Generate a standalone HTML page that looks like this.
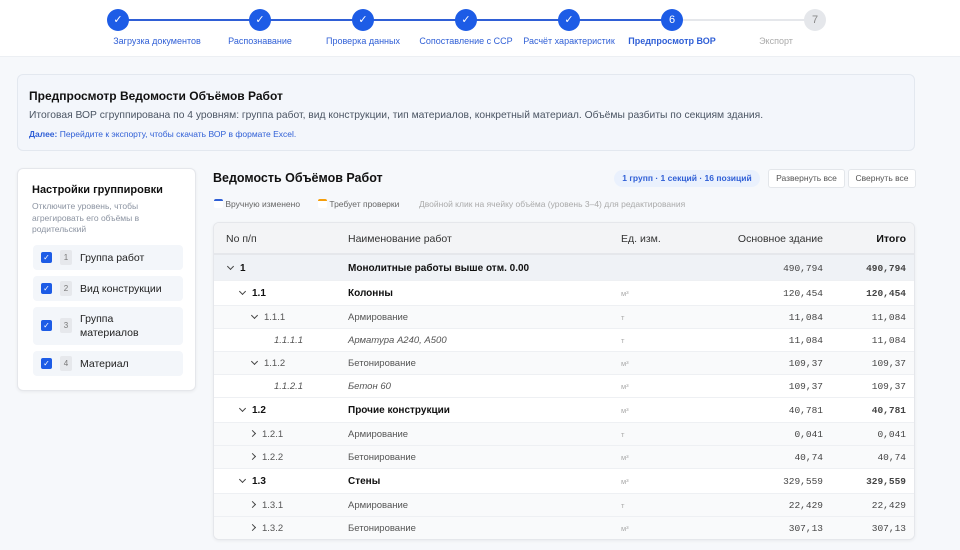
<!DOCTYPE html>
<html><head><meta charset="utf-8"><style>
*{box-sizing:border-box;margin:0;padding:0}
body{width:960px;height:550px;overflow:hidden;background:#f6f8fb;font-family:"Liberation Sans",sans-serif;color:#1f2937;position:relative}
.hdr{position:absolute;left:0;top:0;width:960px;height:57px;background:#fff;border-bottom:1px solid #eceff3}
.ln{position:absolute;top:19px;height:2px;background:#2f5fd6}
.ln.g{background:#e5e7eb}
.c{position:absolute;top:9px;width:22px;height:22px;border-radius:50%;background:#1d5ce6;color:#fff;font-size:11px;text-align:center;line-height:22px}
.c.g{background:#e5e7eb;color:#888}
.lb{position:absolute;top:36px;font-size:9px;color:#2f5fd6;transform:translateX(-50%);white-space:nowrap}
.info{position:absolute;left:17px;top:74px;width:898px;height:77px;background:#f3f6fb;border:1px solid #e3e8ef;border-radius:6px;padding:14px 11px}
.info h1{font-size:12px;font-weight:bold;color:#111}
.info p{font-size:10.3px;color:#4b5563;margin-top:7px}
.info .n{font-size:8.5px;color:#2f5fd6;margin-top:8px}
.lc{position:absolute;left:17px;top:168px;width:179px;height:223px;background:#fff;border:1px solid #e5e7eb;border-radius:6px;box-shadow:0 1px 3px rgba(0,0,0,.06)}
.lc h3{position:absolute;left:14px;top:15px;font-size:11px;font-weight:bold;color:#111}
.lc .d{position:absolute;left:14px;top:32px;width:140px;font-size:8.5px;color:#8b93a1;line-height:11.5px}
.it{position:absolute;left:15px;width:150px;background:#f3f6fa;border-radius:4px;font-size:10.5px;color:#222}
.cb{position:absolute;left:8px;width:11px;height:11px;background:#1d5ce6;border-radius:2px;color:#fff;font-size:8px;line-height:11px;text-align:center}
.nm{position:absolute;left:27px;width:12px;height:15px;background:#e6e8ec;border-radius:2px;font-size:8px;color:#777;text-align:center;line-height:15px}
.tt{position:absolute;left:47px}
.title{position:absolute;left:213px;top:171px;font-size:12.5px;font-weight:bold;color:#111}
.badge{position:absolute;left:614px;top:170px;width:146px;height:17px;background:#eaf1fd;border-radius:9px;font-size:8.5px;color:#2f5fd6;font-weight:bold;text-align:center;line-height:17px}
.btn{position:absolute;top:169px;height:19px;background:#fff;border:1px solid #e3e6ea;border-radius:3px;font-size:8.5px;color:#555;text-align:center;line-height:17px}
.leg{position:absolute;top:199px;font-size:8.5px;color:#666}
.tbl{position:absolute;left:213px;top:222px;width:702px;height:318px;background:#fff;border:1px solid #e5e7eb;border-radius:6px;overflow:hidden;box-shadow:0 1px 3px rgba(0,0,0,.06)}
.r{position:absolute;left:0;width:702px;border-bottom:1px solid #eef0f3;font-size:9.5px;color:#555}
.r span{position:absolute}
.r .m{font-family:"Liberation Mono",monospace;color:#444;font-size:9.5px}
.r .u{left:407px;color:#aaa;font-size:7.5px}
.b{font-weight:bold;color:#111;font-size:10px}
i.d,i.rt{display:inline-block;width:5px;height:5px;border-right:1.3px solid #444;border-bottom:1.3px solid #444;margin-right:7px}
i.d{transform:rotate(45deg);vertical-align:2px}
i.rt{transform:rotate(-45deg);vertical-align:1px}
</style></head><body>
<div class="hdr">
<div class="ln" style="left:118px;width:554px"></div>
<div class="ln g" style="left:672px;width:143px"></div>
<div class="c" style="left:107px">✓</div>
<div class="c" style="left:249px">✓</div>
<div class="c" style="left:352px">✓</div>
<div class="c" style="left:455px">✓</div>
<div class="c" style="left:558px">✓</div>
<div class="c" style="left:661px">6</div>
<div class="c g" style="left:804px">7</div>
<div class="lb" style="left:157px">Загрузка документов</div>
<div class="lb" style="left:260px">Распознавание</div>
<div class="lb" style="left:363px">Проверка данных</div>
<div class="lb" style="left:466px">Сопоставление с ССР</div>
<div class="lb" style="left:569px">Расчёт характеристик</div>
<div class="lb" style="left:672px;font-weight:bold">Предпросмотр ВОР</div>
<div class="lb" style="left:776px;color:#aaa">Экспорт</div>
</div>
<div class="info"><h1>Предпросмотр Ведомости Объёмов Работ</h1>
<p>Итоговая ВОР сгруппирована по 4 уровням: группа работ, вид конструкции, тип материалов, конкретный материал. Объёмы разбиты по секциям здания.</p>
<div class="n"><b>Далее:</b> Перейдите к экспорту, чтобы скачать ВОР в формате Excel.</div></div>
<div class="lc"><h3>Настройки группировки</h3>
<div class="d">Отключите уровень, чтобы агрегировать его объёмы в родительский</div>
<div class="it" style="top:76px;height:25px"><div class="cb" style="top:7px">✓</div><div class="nm" style="top:5px">1</div><div class="tt" style="top:7px">Группа работ</div></div>
<div class="it" style="top:107px;height:25px"><div class="cb" style="top:7px">✓</div><div class="nm" style="top:5px">2</div><div class="tt" style="top:7px">Вид конструкции</div></div>
<div class="it" style="top:138px;height:38px"><div class="cb" style="top:13px">✓</div><div class="nm" style="top:11px">3</div><div class="tt" style="top:5px;line-height:14px">Группа<br>материалов</div></div>
<div class="it" style="top:182px;height:25px"><div class="cb" style="top:7px">✓</div><div class="nm" style="top:5px">4</div><div class="tt" style="top:7px">Материал</div></div>
</div>
<div class="title">Ведомость Объёмов Работ</div>
<div class="badge">1 групп · 1 секций · 16 позиций</div>
<div class="btn" style="left:768px;width:77px">Развернуть все</div>
<div class="btn" style="left:848px;width:68px">Свернуть все</div>
<div class="leg" style="left:214px"><span style="display:inline-block;width:9px;height:9px;border-top:2px solid #2f5fd6;border-radius:2px;background:#fff;vertical-align:-1px"></span> Вручную изменено</div>
<div class="leg" style="left:318px"><span style="display:inline-block;width:9px;height:9px;border-top:2px solid #f59e0b;border-radius:2px;background:#fff;vertical-align:-1px"></span> Требует проверки</div>
<div class="leg" style="left:419px;color:#aaa">Двойной клик на ячейку объёма (уровень 3–4) для редактирования</div>
<div class="tbl">
<div class="r" style="top:0;height:32px;background:#f3f4f6;border-bottom:2px solid #e5e7eb;font-size:10.5px;color:#333"><span style="left:12px;top:10px">No п/п</span><span style="left:134px;top:10px">Наименование работ</span><span style="left:407px;top:10px">Ед. изм.</span><span style="right:93px;top:10px">Основное здание</span><span style="right:10px;top:10px;font-weight:bold;color:#111">Итого</span></div>
<div class="r" style="top:32px;height:26px;background:#eff2f6"><span class="b" style="left:14px;top:8px"><i class="d"></i>1</span><span class="b" style="left:134px;top:8px">Монолитные работы выше отм. 0.00</span><span class="m" style="right:93px;top:8px">490,794</span><span class="m b" style="right:10px;top:8px">490,794</span></div>
<div class="r" style="top:58px;height:25px"><span class="b" style="left:26px;top:7px"><i class="d"></i>1.1</span><span class="b" style="left:134px;top:7px">Колонны</span><span class="u" style="top:8px">м³</span><span class="m" style="right:93px;top:7px">120,454</span><span class="m b" style="right:10px;top:7px">120,454</span></div>
<div class="r" style="top:83px;height:23px;background:#f9fafb"><span style="left:38px;top:6px"><i class="d"></i>1.1.1</span><span style="left:134px;top:6px">Армирование</span><span class="u" style="top:7px">т</span><span class="m" style="right:93px;top:6px">11,084</span><span class="m" style="right:10px;top:6px">11,084</span></div>
<div class="r" style="top:106px;height:23px"><span style="left:60px;top:6px;font-style:italic">1.1.1.1</span><span style="left:134px;top:6px;font-style:italic">Арматура А240, А500</span><span class="u" style="top:7px">т</span><span class="m" style="right:93px;top:6px">11,084</span><span class="m" style="right:10px;top:6px">11,084</span></div>
<div class="r" style="top:129px;height:23px;background:#f9fafb"><span style="left:38px;top:6px"><i class="d"></i>1.1.2</span><span style="left:134px;top:6px">Бетонирование</span><span class="u" style="top:7px">м³</span><span class="m" style="right:93px;top:6px">109,37</span><span class="m" style="right:10px;top:6px">109,37</span></div>
<div class="r" style="top:152px;height:23px"><span style="left:60px;top:6px;font-style:italic">1.1.2.1</span><span style="left:134px;top:6px;font-style:italic">Бетон 60</span><span class="u" style="top:7px">м³</span><span class="m" style="right:93px;top:6px">109,37</span><span class="m" style="right:10px;top:6px">109,37</span></div>
<div class="r" style="top:175px;height:25px"><span class="b" style="left:26px;top:7px"><i class="d"></i>1.2</span><span class="b" style="left:134px;top:7px">Прочие конструкции</span><span class="u" style="top:8px">м³</span><span class="m" style="right:93px;top:7px">40,781</span><span class="m b" style="right:10px;top:7px">40,781</span></div>
<div class="r" style="top:200px;height:23px;background:#f9fafb"><span style="left:36px;top:6px"><i class="rt"></i>1.2.1</span><span style="left:134px;top:6px">Армирование</span><span class="u" style="top:7px">т</span><span class="m" style="right:93px;top:6px">0,041</span><span class="m" style="right:10px;top:6px">0,041</span></div>
<div class="r" style="top:223px;height:23px;background:#f9fafb"><span style="left:36px;top:6px"><i class="rt"></i>1.2.2</span><span style="left:134px;top:6px">Бетонирование</span><span class="u" style="top:7px">м³</span><span class="m" style="right:93px;top:6px">40,74</span><span class="m" style="right:10px;top:6px">40,74</span></div>
<div class="r" style="top:246px;height:25px"><span class="b" style="left:26px;top:7px"><i class="d"></i>1.3</span><span class="b" style="left:134px;top:7px">Стены</span><span class="u" style="top:8px">м³</span><span class="m" style="right:93px;top:7px">329,559</span><span class="m b" style="right:10px;top:7px">329,559</span></div>
<div class="r" style="top:271px;height:23px;background:#f9fafb"><span style="left:36px;top:6px"><i class="rt"></i>1.3.1</span><span style="left:134px;top:6px">Армирование</span><span class="u" style="top:7px">т</span><span class="m" style="right:93px;top:6px">22,429</span><span class="m" style="right:10px;top:6px">22,429</span></div>
<div class="r" style="top:294px;height:24px;background:#f9fafb"><span style="left:36px;top:6px"><i class="rt"></i>1.3.2</span><span style="left:134px;top:6px">Бетонирование</span><span class="u" style="top:7px">м³</span><span class="m" style="right:93px;top:6px">307,13</span><span class="m" style="right:10px;top:6px">307,13</span></div>
</div>
</body></html>
